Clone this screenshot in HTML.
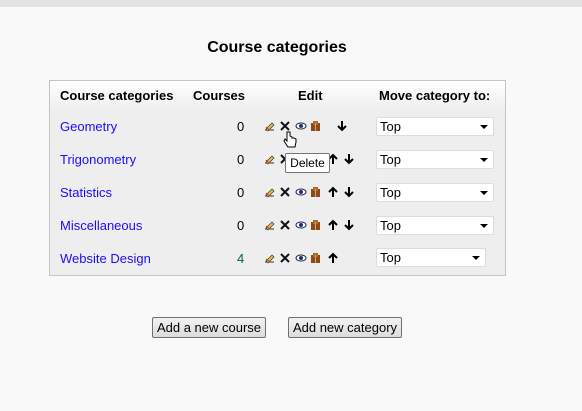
<!DOCTYPE html>
<html><head><style>
body{margin:0;width:582px;height:411px;background:#f9f9f9;font-family:"Liberation Sans",Arial,sans-serif;position:relative;overflow:hidden;font-size:13px}
.top{position:absolute;left:0;top:0;width:582px;height:7px;background:#e3e3e3}
h2{position:absolute;left:0;width:554px;top:39px;margin:0;text-align:center;font-size:16px;font-weight:bold;color:#000}
.box{position:absolute;left:49px;top:80px;width:455px;height:194px;border:1px solid #c4c4c4;background:#eee}
.hd{position:absolute;left:0;top:0;width:455px;height:30px;background:linear-gradient(#fff,#eee)}
.t{position:absolute;white-space:nowrap}
.b{font-weight:bold;color:#000}
a{color:#1a0dff;text-decoration:none}
.sel{position:absolute;left:376px;width:118px;height:19px;background:#fff;border:1px solid #ddd;border-radius:2px;font-size:13px;line-height:17px;box-sizing:border-box;padding-left:3px;color:#000}
.sel:after{content:"";position:absolute;right:5px;top:7px;border-left:4px solid transparent;border-right:4px solid transparent;border-top:4px solid #000}
.btn{position:absolute;top:317px;height:21px;border:1px solid #707070;border-radius:2px;background:linear-gradient(#f2f2f2,#dcdcdc);font-size:13px;line-height:19px;text-align:center;box-sizing:border-box;color:#000}
svg{position:absolute}
.tip{position:absolute;left:285px;top:153px;width:45px;height:20px;border:1px solid #767676;background:#fff;border-radius:2px;font-size:12px;line-height:18px;text-align:center;box-sizing:border-box}
</style></head><body>
<div class="top"></div>
<h2>Course categories</h2>
<div class="box"><div class="hd"></div></div>
<div class="t b" style="left:60px;top:88px">Course categories</div>
<div class="t b" style="left:193px;top:88px">Courses</div>
<div class="t b" style="left:298px;top:88px">Edit</div>
<div class="t b" style="left:379px;top:88px">Move category to:</div>

<div class="t" style="left:60px;top:119px"><a>Geometry</a></div>
<div class="t" style="left:60px;top:152px"><a>Trigonometry</a></div>
<div class="t" style="left:60px;top:185px"><a>Statistics</a></div>
<div class="t" style="left:60px;top:218px"><a>Miscellaneous</a></div>
<div class="t" style="left:60px;top:251px"><a>Website Design</a></div>
<div class="t" style="left:237px;top:119px">0</div>
<div class="t" style="left:237px;top:152px">0</div>
<div class="t" style="left:237px;top:185px">0</div>
<div class="t" style="left:237px;top:218px">0</div>
<div class="t" style="left:237px;top:251px;color:#063">4</div>

<svg width="582" height="411" style="left:0;top:0">
<defs>
<g id="ed"><path d="M0 9h9" stroke="#333" stroke-width="1"/><path d="M1 8l6-6 2 2-6 6z" fill="#e8c040" stroke="#333" stroke-width="0.7"/><path d="M1 6q2 2 4 3" stroke="#c33" fill="none"/></g>
<g id="x"><path d="M1 1l8 8M9 1l-8 8" stroke="#111" stroke-width="2"/></g>
<g id="eye"><ellipse cx="5" cy="5" rx="5" ry="3" fill="#fff" stroke="#224" stroke-width="1"/><circle cx="5" cy="5" r="2" fill="#1a2f8a"/></g>
<g id="bx"><rect x="0" y="2" width="9" height="8" fill="#8a4a1a"/><rect x="2" y="0" width="5" height="4" fill="#b06a2a"/><rect x="4" y="2" width="1" height="8" fill="#e0a060"/></g>
<g id="up"><path d="M4 10V2M0 5l4-4 4 4" stroke="#000" stroke-width="2" fill="none"/></g>
<g id="dn"><path d="M4 0v8M0 5l4 4 4-4" stroke="#000" stroke-width="2" fill="none"/></g>
</defs>
<g transform="translate(265,121)"><use href="#ed"/><use href="#x" x="15"/><use href="#eye" x="31"/><use href="#bx" x="46"/><use href="#dn" x="73"/></g>
<g transform="translate(265,154)"><use href="#ed"/><use href="#x" x="15"/><use href="#eye" x="31"/><use href="#bx" x="46"/><use href="#up" x="64"/><use href="#dn" x="80"/></g>
<g transform="translate(265,187)"><use href="#ed"/><use href="#x" x="15"/><use href="#eye" x="31"/><use href="#bx" x="46"/><use href="#up" x="64"/><use href="#dn" x="80"/></g>
<g transform="translate(265,220)"><use href="#ed"/><use href="#x" x="15"/><use href="#eye" x="31"/><use href="#bx" x="46"/><use href="#up" x="64"/><use href="#dn" x="80"/></g>
<g transform="translate(265,253)"><use href="#ed"/><use href="#x" x="15"/><use href="#eye" x="31"/><use href="#bx" x="46"/><use href="#up" x="64"/></g>
</svg>
<div class="tip">Delete</div>
<svg width="14" height="18" style="left:283px;top:131px"><path d="M4 1v9l-2-2-1 2 4 6h7l1-5v-3l-2-1-2 0v-1l-2-1V1z" fill="#fff" stroke="#000" stroke-width="1"/></svg>

<div class="sel" style="top:117px">Top</div>
<div class="sel" style="top:150px">Top</div>
<div class="sel" style="top:183px">Top</div>
<div class="sel" style="top:216px">Top</div>
<div class="sel" style="top:248px;width:110px">Top</div>

<div class="btn" style="left:152px;width:114px">Add a new course</div>
<div class="btn" style="left:288px;width:114px">Add new category</div>
</body></html>
